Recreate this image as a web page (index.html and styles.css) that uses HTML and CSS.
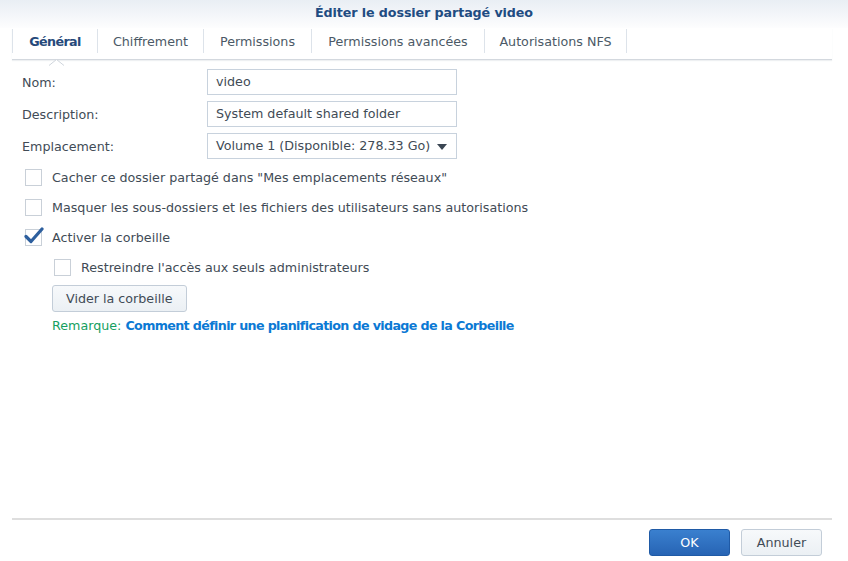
FILE: index.html
```html
<!DOCTYPE html>
<html lang="fr">
<head>
<meta charset="utf-8">
<link rel="stylesheet" href="styles.css">
</head>
<body>
<div class="dialog">
  <div class="titlebar">Éditer le dossier partagé video</div>
  <div class="tabs">
    <div class="tab active">Général
      <svg class="notch" width="15" height="7" viewBox="0 0 15 7"><path d="M0 6.5 L7.5 0.5 L15 6.5" fill="#fff" stroke="#cfd5dc" stroke-width="1"/></svg>
    </div>
    <div class="tab">Chiffrement</div>
    <div class="tab">Permissions</div>
    <div class="tab">Permissions avancées</div>
    <div class="tab">Autorisations NFS</div>
  </div>
  <div class="content">
    <div class="field">
      <label class="label">Nom:</label>
      <div class="input">video</div>
    </div>
    <div class="field">
      <label class="label">Description:</label>
      <div class="input">System default shared folder</div>
    </div>
    <div class="field">
      <label class="label">Emplacement:</label>
      <div class="input select">Volume 1 (Disponible: 278.33 Go)
        <svg class="caret" width="10" height="6" viewBox="0 0 10 6"><path d="M0 0 H10 L5 6 Z" fill="#3b4653"/></svg>
      </div>
    </div>
    <div class="check first">
      <span class="box"></span>
      <span>Cacher ce dossier partagé dans "Mes emplacements réseaux"</span>
    </div>
    <div class="check">
      <span class="box"></span>
      <span>Masquer les sous-dossiers et les fichiers des utilisateurs sans autorisations</span>
    </div>
    <div class="check">
      <span class="box checked">
        <svg class="tick" width="20" height="17" viewBox="0 0 20 17"><path d="M2 9.5 L7 14.5 L18 2" fill="none" stroke="#2d5f9e" stroke-width="3.2" stroke-linecap="round" stroke-linejoin="round"/></svg>
      </span>
      <span>Activer la corbeille</span>
    </div>
    <div class="sub">
      <div class="check">
        <span class="box"></span>
        <span>Restreindre l'accès aux seuls administrateurs</span>
      </div>
      <div class="btn">Vider la corbeille</div>
      <div class="note"><span class="green">Remarque:</span> <a class="link">Comment définir une planification de vidage de la Corbeille</a></div>
    </div>
  </div>
  <div class="footer">
    <div class="btn primary">OK</div>
    <div class="btn action">Annuler</div>
  </div>
</div>
</body>
</html>
```
FILE: styles.css
```css
html, body {
  margin: 0;
  padding: 0;
  background: #fff;
}
body {
  font-family: "DejaVu Sans", Verdana, sans-serif;
  font-size: 12.7px;
  color: #414b56;
}
.dialog {
  width: 848px;
  height: 561px;
  display: flex;
  flex-direction: column;
}
.titlebar {
  height: 28px;
  line-height: 26px;
  text-align: center;
  font-weight: bold;
  letter-spacing: -0.1px;
  color: #1f4c82;
  background: linear-gradient(#e9eef4, #fdfdfe);
}
.tabs {
  margin: 0 16px 0 12px;
  height: 31px;
  display: flex;
  align-items: stretch;
  border-bottom: 1px solid #d3d8de;
  box-shadow: 0 1px 1px #eef0f2;
}
.tab {
  position: relative;
  box-sizing: border-box;
  text-align: center;
  margin: 1px 0 6px;
  padding-top: 1px;
  line-height: 24px;
  border-left: 1px solid #dde3ea;
  color: #4b5966;
}
.tab:nth-child(1) { width: 85px; }
.tab:nth-child(2) { width: 106px; }
.tab:nth-child(3) { width: 108px; }
.tab:nth-child(4) { width: 173px; }
.tab:nth-child(5) { width: 143px; border-right: 1px solid #dde3ea; }
.tab.active {
  font-weight: bold;
  letter-spacing: -0.6px;
  color: #26497a;
}
.notch {
  position: absolute;
  left: 36px;
  bottom: -13px;
}
.content {
  flex: 1;
  padding: 9px 0 0 22px;
}
.field {
  display: flex;
  align-items: center;
  height: 26px;
  margin-bottom: 6px;
}
.label {
  width: 185px;
}
.input {
  position: relative;
  box-sizing: border-box;
  width: 250px;
  height: 26px;
  line-height: 24px;
  border: 1px solid #c8d2dd;
  padding: 0 8px;
  color: #414b56;
}
.caret {
  position: absolute;
  right: 9px;
  top: 10px;
}
.check {
  display: flex;
  align-items: center;
  height: 30px;
  margin-left: 3px;
}
.check.first {
  margin-top: -3px;
}
.box {
  position: relative;
  box-sizing: border-box;
  width: 17px;
  height: 17px;
  border: 1px solid #c9d0d8;
  background: #fff;
  margin-right: 10px;
  flex: none;
}
.tick {
  position: absolute;
  left: -2px;
  top: -3px;
}
.sub {
  padding-left: 30px;
}
.sub .check {
  margin-left: 2px;
}
.btn {
  box-sizing: border-box;
  display: inline-flex;
  align-items: center;
  justify-content: center;
  height: 27px;
  padding: 0 13px;
  border: 1px solid #c3cdd8;
  border-radius: 3px;
  background: linear-gradient(#f7f9fb, #ebf0f4);
  color: #414b56;
}
.sub .btn {
  margin-top: 3px;
}
.note {
  margin-top: 6px;
}
.green {
  color: #15a061;
}
.link {
  color: #0b79d4;
  font-weight: bold;
  letter-spacing: -0.65px;
}
.footer {
  margin: 0 16px 0 12px;
  height: 43px;
  border-top: 2px solid #dedede;
  display: flex;
  justify-content: flex-end;
  align-items: flex-start;
  gap: 11px;
  padding: 9px 10px 0 0;
  box-sizing: border-box;
}
.footer .btn {
  width: 81px;
  padding: 0;
}
.primary {
  background: linear-gradient(#3a80cf, #2764b4);
  border-color: #1f5aa6;
  color: #fff;
}
```
